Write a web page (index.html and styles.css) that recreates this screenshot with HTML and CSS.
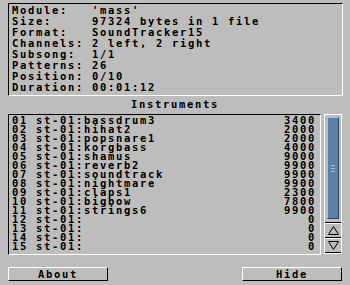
FILE: index.html
```html
<!DOCTYPE html>
<html lang="en">
<head>
    <meta charset="UTF-8">
    <title>Module Info</title>
    <link rel="stylesheet" href="styles.css">
</head>
<body>
    <div class="info">
        <div class="line"><span class="key">Module:</span><span>'mass'</span></div>
        <div class="line"><span class="key">Size:</span><span>97324 bytes in 1 file</span></div>
        <div class="line"><span class="key">Format:</span><span>SoundTracker15</span></div>
        <div class="line"><span class="key">Channels:</span><span>2 left, 2 right</span></div>
        <div class="line"><span class="key">Subsong:</span><span>1/1</span></div>
        <div class="line"><span class="key">Patterns:</span><span>26</span></div>
        <div class="line"><span class="key">Position:</span><span>0/10</span></div>
        <div class="line"><span class="key">Duration:</span><span>00:01:12</span></div>
    </div>

    <h2 class="title">Instruments</h2>

    <div class="instruments">
        <ul class="list" id="instList">
            <!-- rows are added by the script -->
        </ul>
        <div class="scroller">
            <div class="track">
                <div class="knob">
                    <svg width="4" height="7" viewBox="0 0 4 7"><path d="M0 0.5H4M0 3.5H4M0 6.5H4" stroke="#a9c0d8" stroke-width="1"/></svg>
                </div>
            </div>
            <div class="arrow">
                <svg width="13" height="11" viewBox="0 0 13 11"><path d="M6.5 1.5 L11.5 9.5 L1.5 9.5 Z" fill="none" stroke="#000" stroke-width="1"/></svg>
            </div>
            <div class="arrow">
                <svg width="13" height="11" viewBox="0 0 13 11"><path d="M1.5 1.5 L11.5 1.5 L6.5 9.5 Z" fill="none" stroke="#000" stroke-width="1"/></svg>
            </div>
        </div>
    </div>

    <div class="buttons">
        <button class="button">About</button>
        <button class="button">Hide</button>
    </div>

    <script>
        const instruments = [
            ['01', 'st-01:bassdrum3', 3400],
            ['02', 'st-01:hihat2', 2000],
            ['03', 'st-01:popsnare1', 2000],
            ['04', 'st-01:korgbass', 4000],
            ['05', 'st-01:shamus', 9000],
            ['06', 'st-01:reverb2', 9900],
            ['07', 'st-01:soundtrack', 9900],
            ['08', 'st-01:nightmare', 9900],
            ['09', 'st-01:claps1', 2300],
            ['10', 'st-01:bigbow', 7800],
            ['11', 'st-01:strings6', 9900],
            ['12', 'st-01:', 0],
            ['13', 'st-01:', 0],
            ['14', 'st-01:', 0],
            ['15', 'st-01:', 0]
        ];

        const list = document.getElementById('instList');
        instruments.forEach(inst => {
            list.innerHTML += `
                <li>
                    <span class="idx">${inst[0]}</span>
                    <span class="name">${inst[1]}</span>
                    <span class="len">${inst[2]}</span>
                </li>`;
        });
    </script>
</body>
</html>
```

FILE: styles.css
```css
body, html {
    margin: 0;
    padding: 0;
    width: 350px;
    height: 285px;
    overflow: hidden;
    background: #bdbdbd;
    color: #000;
    font-family: 'DejaVu Sans Mono', monospace;
    font-weight: bold;
    font-size: 10.5px;
    letter-spacing: 1.68px;
}

.info {
    margin: 3px 8px 0 8px;
    width: 330px;
    height: 90px;
    padding: 1px 0 0 3px;
    border-top: 1px solid #000;
    border-left: 1px solid #000;
    border-bottom: 1px solid #fff;
    border-right: 1px solid #fff;
}

.line {
    display: flex;
    height: 11px;
    line-height: 11px;
    white-space: pre;
}

.key {
    width: 80px;
}

.title {
    margin: 0;
    height: 18px;
    line-height: 17px;
    font-size: 10.5px;
    text-align: center;
}

.instruments {
    display: flex;
    margin: 0 8px;
    gap: 3px;
}

.list {
    list-style: none;
    margin: 0;
    padding: 1px 0 0 3px;
    width: 308px;
    height: 138px;
    border-top: 1px solid #000;
    border-left: 1px solid #000;
    border-bottom: 1px solid #fff;
    border-right: 1px solid #fff;
}

.list li {
    display: flex;
    height: 9px;
    line-height: 9px;
    white-space: pre;
}

.idx {
    width: 24px;
}

.len {
    margin-left: auto;
    padding-right: 4px;
}

.scroller {
    width: 16px;
    height: 138px;
    border: 1px solid #fff;
    display: flex;
    flex-direction: column;
}

.track {
    flex: 1;
    padding: 2px 2px 3px 2px;
    border-bottom: 1px solid #000;
}

.knob {
    height: 100%;
    box-sizing: border-box;
    background: #5b7fa6;
    border: 1px solid #2e4663;
    border-top-color: #a9c0d8;
    border-left-color: #a9c0d8;
    display: flex;
    align-items: center;
    justify-content: center;
}

.arrow {
    height: 15px;
    box-sizing: border-box;
    border-top: 1px solid #fff;
    border-bottom: 1px solid #000;
    display: flex;
    align-items: center;
    justify-content: center;
}

.buttons {
    display: flex;
    justify-content: space-between;
    margin: 12px 8px 0 8px;
}

.button {
    width: 100px;
    height: 14px;
    padding: 0;
    background: #bdbdbd;
    border-top: 1px solid #fff;
    border-left: 1px solid #fff;
    border-bottom: 1px solid #000;
    border-right: 1px solid #000;
    font-family: 'DejaVu Sans Mono', monospace;
    font-weight: bold;
    font-size: 10.5px;
    letter-spacing: 1.68px;
    line-height: 12px;
    color: #000;
}
```
